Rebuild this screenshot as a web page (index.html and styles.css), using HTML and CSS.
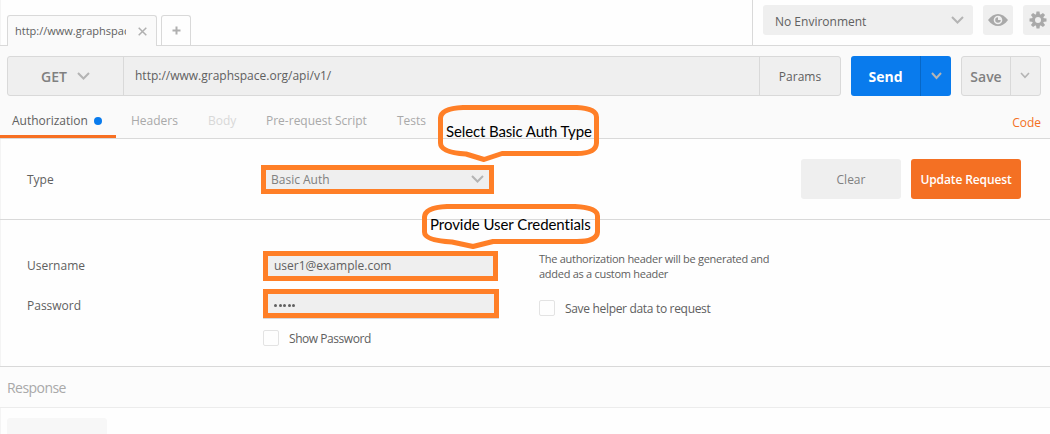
FILE: index.html
```html
<!DOCTYPE html>
<html lang="en">
<head>
<meta charset="utf-8">
<title>Request builder</title>
<link rel="stylesheet" href="styles.css">
</head>
<body>
<div class="app">
  <header class="topbar">
    <div class="tabs">
      <div class="tab tab-active">
        <span class="tab-title">http://www.graphspac</span>
        <svg class="tab-close" width="9" height="9" viewBox="0 0 9 9"><path d="M.7.7l7.6 7.6M8.3.7L.7 8.3"/></svg>
      </div>
      <div class="tab tab-new"><svg width="9" height="9" viewBox="0 0 9 9"><path d="M4.5.5v8M.5 4.5h8"/></svg></div>
    </div>
    <div class="env">
      <div class="env-select"><span>No Environment</span>
        <svg class="chev" width="13" height="8" viewBox="0 0 13 8"><path d="M1 1l5.5 5.5L12 1"/></svg>
      </div>
      <div class="icon-btn"><svg width="20" height="12" viewBox="0 0 20 12"><path class="solid" fill-rule="evenodd" d="M0 6C3 2 6.300 0 10 0s7 2 10 6c-3 4-6.300 6-10 6S3 10 0 6zM10 1.700a4.300 4.300 0 1 0 0 8.600a4.300 4.300 0 1 0 0-8.600z"/><path class="solid" d="M10 3.200A2.800 2.800 0 1 0 12.800 6H10z"/></svg></div>
      <div class="icon-btn"><svg width="18" height="18" viewBox="-9 -9 18 18"><g class="solid"><g id="teeth"><path d="M-1.500-8.500h3l.6 4h-4.200zM-1.500 8.500h3l.6-4h-4.200zM-8.500-1.500v3l4 .6v-4.200zM8.500-1.500v3l-4 .6v-4.200z"/></g><use href="#teeth" transform="rotate(45)"/></g><circle class="ring" r="4.500"/></svg></div>
    </div>
  </header>

  <section class="request">
    <div class="urlrow">
      <div class="urlbar">
        <div class="method"><span>GET</span><svg class="chev" width="13" height="8" viewBox="0 0 13 8"><path d="M1 1l5.500 5.500L12 1"/></svg></div>
        <div class="url"><span>http://www.graphspace.org/api/v1/</span></div>
        <div class="params"><span>Params</span></div>
      </div>
      <div class="send">
        <div class="send-main"><span>Send</span></div>
        <div class="send-more"><svg class="chev" width="11" height="8" viewBox="0 0 11 8"><path d="M1 1l4.500 5L10 1"/></svg></div>
      </div>
      <div class="save">
        <div class="save-main"><span>Save</span></div>
        <div class="save-more"><svg class="chev thin" width="10" height="7" viewBox="0 0 10 7"><path d="M1 1l4 4.300L9 1"/></svg></div>
      </div>
    </div>
    <nav class="sections">
      <div class="section active"><span>Authorization</span><i class="dot"></i></div>
      <div class="section s-headers"><span>Headers</span></div>
      <div class="section s-body"><span>Body</span></div>
      <div class="section s-pre"><span>Pre-request Script</span></div>
      <div class="section"><span>Tests</span></div>
      <div class="code"><span>Code</span></div>
    </nav>
  </section>

  <section class="typerow">
    <div class="label"><span>Type</span></div>
    <div class="field type-select"><span>Basic Auth</span><svg class="chev" width="13" height="8" viewBox="0 0 13 8"><path d="M1 1l5.500 5.500L12 1"/></svg></div>
    <div class="actions">
      <div class="btn clear"><span>Clear</span></div>
      <div class="btn update"><span>Update Request</span></div>
    </div>
  </section>

  <section class="creds">
    <div class="labels">
      <div class="lab"><span>Username</span></div>
      <div class="lab"><span>Password</span></div>
    </div>
    <div class="inputs">
      <div class="field username"><span>user1@example.com</span></div>
      <div class="field password"><i></i><i></i><i></i><i></i><i></i></div>
      <div class="check check-show"><i class="box"></i><span>Show Password</span></div>
    </div>
    <div class="helper">
      <div class="note"><span>The authorization header will be generated and</span><br><span>added as a custom header</span></div>
      <div class="check check-helper"><i class="box"></i><span>Save helper data to request</span></div>
    </div>
  </section>

  <section class="response"><span>Response</span></section>
  <section class="result"><div class="placeholder"></div></section>

  <div class="callout callout-type">
    <svg width="161" height="57" viewBox="0 0 161 57"><path d="M25 2.500H139Q158.500 3.500 158.500 12V38Q158 48.500 139 48.500H64L46 54.500 28 49Q2.500 47.500 2.500 38V13Q3 3.500 25 2.500z"/></svg>
    <span>Select Basic Auth Type</span>
  </div>
  <div class="callout callout-creds">
    <svg width="178" height="46" viewBox="0 0 178 46"><path d="M25 2.500H153Q175.500 3.500 175.500 12V28Q175 37.500 155 37.500H71L51 42.500 30 38Q2.500 36.500 2.500 28V13Q3 3.500 25 2.500z"/></svg>
    <span>Provide User Credentials</span>
  </div>
</div>
</body>
</html>
```
FILE: styles.css
```css
* { box-sizing: border-box; }
body { margin: 0; background: #fefefe; }
.app {
  position: relative;
  width: 1050px;
  height: 434px;
  overflow: hidden;
  font: 12px/18px "Open Sans", "Noto Sans", sans-serif;
  color: #606060;
  box-shadow: inset 1px 0 #f4f4f4;
}
span { white-space: nowrap; }
svg { display: block; flex: none; }
svg path { fill: none; stroke: #b0b0b0; stroke-width: 2; }
.chev path { stroke: #b4b4b4; }
.thin path { stroke-width: 1.600; }
.solid, svg .solid path, svg path.solid { fill: #a9a9a9; stroke: none; }
.ring { fill: none; stroke: #a9a9a9; stroke-width: 3; }

.topbar { display: flex; justify-content: space-between; height: 46px; border-bottom: 1px solid #d9d9d9; }
.tabs { display: flex; gap: 4px; padding: 15px 0 0 7px; }
.tab { display: flex; align-items: center; height: 30px; border: 1px solid #d9d9d9; border-bottom: 0; border-radius: 3px 3px 0 0; }
.tab-active { width: 150px; height: 31px; padding-left: 7px; background: #fafafa; }
.tab-title { width: 111px; overflow: hidden; font-size: 11px; }
.tab-close { margin-left: 12px; }
.tab-close path { stroke-width: 1.500; }
.tab-new { width: 30px; justify-content: center; }
.env { display: flex; gap: 10px; width: 298px; padding: 5px 0 0 10px; border-left: 1px solid #d9d9d9; }
.env-select { display: flex; flex: none; align-items: center; justify-content: space-between; width: 210px; height: 30px; padding: 3px 9px 0 12px; background: #efefef; border-radius: 3px; }
.env-select .chev { margin-bottom: 4px; }
.icon-btn { display: flex; flex: none; align-items: center; justify-content: center; width: 30px; height: 30px; background: #efefef; border-radius: 3px; }

.request { height: 93px; padding: 10px 9px 0 7px; background: #fafafa; border-bottom: 1px solid #d9d9d9; }
.urlrow { display: flex; gap: 10px; }
.urlbar, .send, .save { display: flex; height: 40px; border-radius: 3px; }
.urlbar { width: 834px; background: #efefef; border: 1px solid #d9d9d9; }
.method { display: flex; align-items: center; width: 116px; padding: 2px 0 0 33px; border-right: 1px solid #d9d9d9; color: #808080; font-size: 14px; font-weight: 600; }
.method .chev { margin: 0 0 2px 10px; }
.url { display: flex; flex: 1; align-items: center; padding-left: 11px; }
.params { display: flex; align-items: center; justify-content: center; width: 81px; padding-top: 2px; border-left: 1px solid #d9d9d9; }
.send { width: 100px; background: #097bed; color: #fff; font-size: 14px; font-weight: 700; }
.send-main, .send-more, .save-main, .save-more { display: flex; align-items: center; justify-content: center; }
.send-main { width: 70px; padding-top: 2px; border-right: 1px solid #0767c6; }
.send-more { width: 30px; }
.save { width: 80px; background: #efefef; border: 1px solid #d9d9d9; color: #808080; font-size: 14px; font-weight: 600; }
.save-main { width: 49px; padding-top: 2px; border-right: 1px solid #d9d9d9; }
.save-more { width: 28px; padding-bottom: 1px; }
.sections { display: flex; height: 42px; margin-left: -7px; color: #a9a9a9; }
.section, .code { padding-top: 16px; }
.active { display: flex; gap: 6px; width: 116px; padding-left: 12px; border-bottom: 3px solid #f76f22; color: #606060; }
.dot { width: 8px; height: 8px; margin-top: 5px; border-radius: 50%; background: #097bed; }
.s-headers { width: 92px; padding-left: 15px; }
.s-body { width: 58px; color: #d8d8d8; }
.s-pre { width: 131px; }
.code { margin-left: auto; padding-top: 18px; color: #f47023; }

.typerow { display: flex; height: 81px; padding: 20px 29px 0 27px; border-bottom: 1px solid #d9d9d9; }
.label { width: 234px; padding-top: 12px; }
.field { display: flex; align-items: center; background: #efefef; border: 5px solid #ff7f27; }
.type-select { width: 233px; height: 29px; margin-top: 6px; padding: 0 5px; justify-content: space-between; color: #808080; }
.type-select .chev { margin-bottom: 1px; }
.actions { display: flex; gap: 10px; margin-left: auto; }
.btn { display: flex; align-items: center; justify-content: center; height: 40px; padding-top: 2px; border-radius: 3px; }
.clear { width: 100px; background: #efefef; color: #808080; }
.update { width: 110px; background: #f47023; color: #fff; font-weight: 600; letter-spacing: -.12px; }

.creds { display: flex; height: 147px; padding: 31px 0 0 27px; border-bottom: 1px solid #d9d9d9; }
.labels { width: 236px; padding-top: 6px; }
.lab { height: 40px; }
.inputs { width: 276px; }
.username { width: 235px; height: 30px; padding-left: 6px; }
.password { gap: 1.500px; width: 236px; height: 29px; margin-top: 8px; padding: 3px 0 0 6px; box-shadow: 0 1px #d9d9d9; }
.password i { width: 3px; height: 3px; border-radius: 50%; background: #606060; }
.check { display: flex; align-items: center; gap: 10px; margin-top: 12px; height: 16px; }
.check span { padding-top: 2px; }
.check-show { letter-spacing: -.45px; }
.check-helper { margin-top: 19px; letter-spacing: -.32px; }
.box { width: 16px; height: 16px; border: 1px solid #e3e3e3; border-radius: 2px; }
.note { font-size: 11px; line-height: 15px; letter-spacing: -.28px; }

.response { height: 41px; padding: 12px 0 0 7px; background: #fcfcfc; border-bottom: 1px solid #ececec; color: #a9a9a9; font-size: 14px; letter-spacing: -.55px; }
.result { padding: 10px 7px 0; }
.placeholder { width: 100px; height: 30px; background: #f7f7f7; border-radius: 3px; }

/* annotation bubbles float over the form */
.callout { position: absolute; color: #000; font: 15px/18px Lato, sans-serif; font-variant-ligatures: none; letter-spacing: -.13px; }
.callout svg path { stroke: #ff7f27; stroke-width: 5; stroke-linejoin: round; }
.callout span { position: absolute; left: 8px; top: 17px; }
.callout-type { left: 438px; top: 105px; }
.callout-creds { left: 422px; top: 204px; letter-spacing: -.05px; }
.callout-creds span { top: 11px; }
```
